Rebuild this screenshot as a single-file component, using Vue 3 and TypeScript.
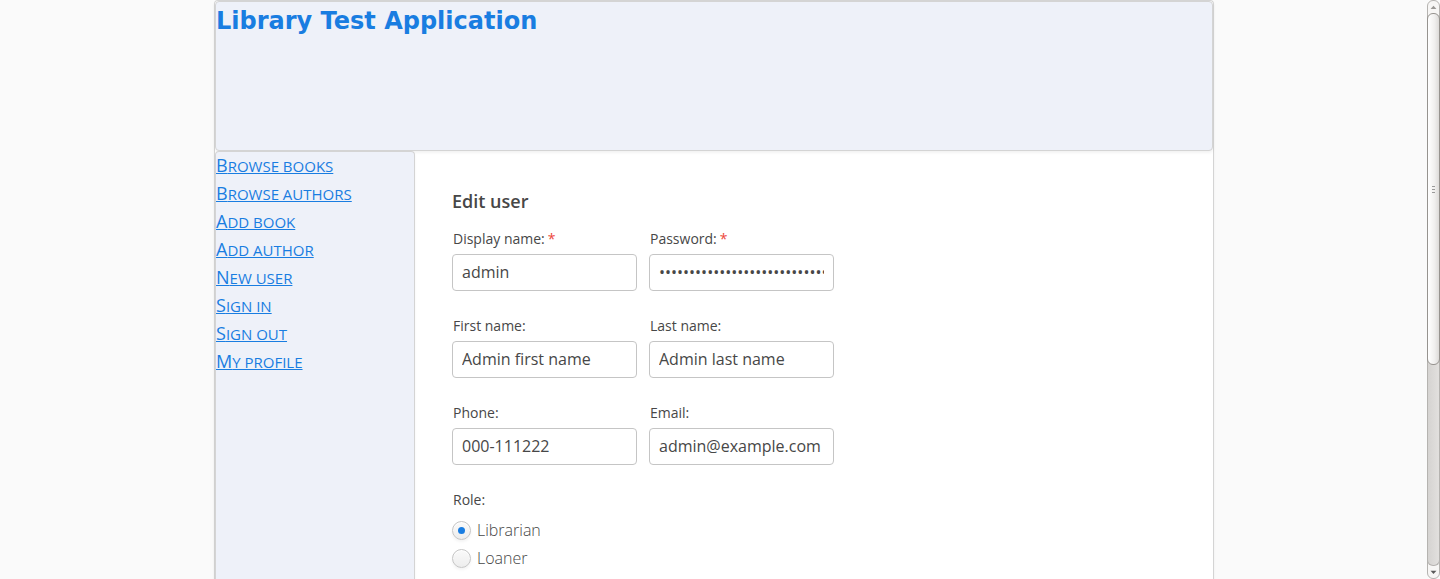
<script setup lang="ts">
import { reactive, ref } from 'vue'

interface Field {
  id: string
  label: string
  type: string
  value: string
  required: boolean
}

const links: string[] = [
  'Browse books',
  'Browse authors',
  'Add book',
  'Add author',
  'New user',
  'Sign in',
  'Sign out',
  'My profile',
]

const fields = reactive<Field[]>([
  { id: 'display-name', label: 'Display name:', type: 'text', value: 'admin', required: true },
  { id: 'password', label: 'Password:', type: 'password', value: 'x'.repeat(60), required: true },
  { id: 'first-name', label: 'First name:', type: 'text', value: 'Admin first name', required: false },
  { id: 'last-name', label: 'Last name:', type: 'text', value: 'Admin last name', required: false },
  { id: 'phone', label: 'Phone:', type: 'text', value: '000-111222', required: false },
  { id: 'email', label: 'Email:', type: 'text', value: 'admin@example.com', required: false },
])

const roles: string[] = ['Librarian', 'Loaner']
const role = ref<string>('Librarian')
</script>

<template>
  <div class="viewport">
    <div class="page">
      <div class="shell">
        <header class="banner">
          <h1>Library Test Application</h1>
        </header>
        <div class="body">
          <nav class="menu">
            <a v-for="link in links" :key="link" href="#">{{ link }}</a>
          </nav>
          <main class="content">
            <h2>Edit user</h2>
            <form @submit.prevent>
              <div class="fields">
                <div v-for="f in fields" :key="f.id" class="field">
                  <label :for="f.id">{{ f.label }}<span v-if="f.required" class="star">*</span></label>
                  <input :id="f.id" v-model="f.value" :type="f.type" autocomplete="off" />
                </div>
              </div>
              <fieldset>
                <legend>Role:</legend>
                <label v-for="r in roles" :key="r" class="option">
                  <input v-model="role" type="radio" name="role" :value="r" />{{ r }}
                </label>
              </fieldset>
            </form>
          </main>
        </div>
      </div>
    </div>
    <div class="scrollbar" aria-hidden="true">
      <svg class="arrow" viewBox="0 0 13 13"><path d="M3 9h7L6.500 5z" fill="#9a9895" /></svg>
      <div class="thumb"><i></i><i></i><i></i></div>
      <div class="rest"></div>
      <svg class="arrow" viewBox="0 0 13 13"><path d="M3 5h7L6.500 9z" fill="#5a5a5a" /></svg>
    </div>
  </div>
</template>

<style>
body {
  margin: 0;
  background: #fafafa;
}
</style>

<style scoped>
* {
  box-sizing: border-box;
}

.viewport {
  display: flex;
  height: 100vh;
  overflow: hidden;
  background: #fafafa;
  color: #474747;
  font: 400 16px/24px "Open Sans", sans-serif;
}

.page {
  flex: 1;
  display: flex;
  justify-content: center;
  min-width: 0;
  padding-left: 1px;
}

.shell {
  display: flex;
  flex-direction: column;
  width: 100%;
  max-width: 1000px;
  border: 1px solid #d4d4d4;
  border-bottom: 0;
  border-radius: 4px 4px 0 0;
  background: #fff;
  box-shadow: 0 2px 3px rgba(0, 0, 0, 0.05);
}

.banner {
  flex: none;
  height: 150px;
  border: 1px solid #d4d4d4;
  border-radius: 4px;
  background: #eef1f9;
  box-shadow: 0 2px 3px rgba(0, 0, 0, 0.05);
}

h1 {
  margin: 5px 0 0;
  color: #197de1;
  font: 700 24px/28px "DejaVu Sans", sans-serif;
}

.body {
  flex: 1;
  display: flex;
  min-height: 0;
}

.menu {
  flex: none;
  display: flex;
  flex-direction: column;
  align-items: flex-start;
  width: 200px;
  border: 1px solid #d4d4d4;
  border-bottom: 0;
  border-radius: 4px 4px 0 0;
  background: #eef1f9;
  box-shadow: 0 2px 3px rgba(0, 0, 0, 0.05);
}

.menu a {
  display: block;
  height: 28px;
  color: #197de1;
  font-size: 15px;
  font-weight: 500;
  line-height: 26px;
  text-transform: uppercase;
  white-space: nowrap;
}

.menu a::first-letter {
  font-size: 18px;
}

.content {
  flex: 1;
  padding: 37px;
}

h2 {
  margin: 0 0 14px;
  font-size: 18px;
  font-weight: 600;
  line-height: 26px;
}

.fields {
  display: grid;
  grid-template-columns: 185px 185px;
  gap: 24px 12px;
}

.field label {
  display: block;
  height: 26px;
  padding-left: 1px;
  font-size: 14px;
  line-height: 21px;
}

.star {
  margin-left: 3px;
  color: #ed473b;
}

.field input {
  display: block;
  width: 100%;
  height: 37px;
  padding: 0 9px 2px;
  border: 1px solid #c5c5c5;
  border-radius: 4px;
  outline: 0;
  background: #fff;
  color: #474747;
  font: inherit;
}

fieldset {
  margin: 24px 0 0;
  padding: 0;
  border: 0;
}

legend {
  height: 27px;
  padding: 0 1px;
  font-size: 14px;
  line-height: 21px;
}

.option {
  display: flex;
  align-items: center;
  gap: 6px;
  height: 28px;
  font-weight: 300;
}

.option input {
  appearance: none;
  display: grid;
  place-items: center;
  width: 19px;
  height: 19px;
  margin: 0;
  border: 1px solid #c5c5c5;
  border-radius: 50%;
  background: linear-gradient(#fafafa, #ededed);
  box-shadow: inset 0 1px 0 #fff, 0 2px 3px rgba(0, 0, 0, 0.05);
}

.option input:checked::before {
  content: "";
  width: 7px;
  height: 7px;
  border-radius: 50%;
  background: #197de1;
}

.scrollbar {
  flex: none;
  display: flex;
  flex-direction: column;
  width: 13px;
  border: 1px solid #b5b3b0;
  border-radius: 6px;
  background: #f7f6f5;
}

.arrow {
  flex: none;
  width: 11px;
  height: 12px;
}

.thumb {
  position: relative;
  z-index: 1;
  flex: 351 0 0;
  display: flex;
  flex-direction: column;
  align-items: center;
  justify-content: center;
  gap: 2px;
  margin: 0 -1px;
  border: 1px solid #96938f;
  border-radius: 6px;
  background: linear-gradient(90deg, #fff, #f0efee 60%, #dddbd9);
}

.thumb i {
  width: 3px;
  height: 1px;
  background: #999;
}

.rest {
  flex: 206 0 0;
  margin: -6px -1px 0;
  border: 1px solid #b5b3b0;
  border-top: 0;
  border-radius: 0 0 6px 6px;
  background: linear-gradient(90deg, #d5d3d1, #e2e0de);
}
</style>
